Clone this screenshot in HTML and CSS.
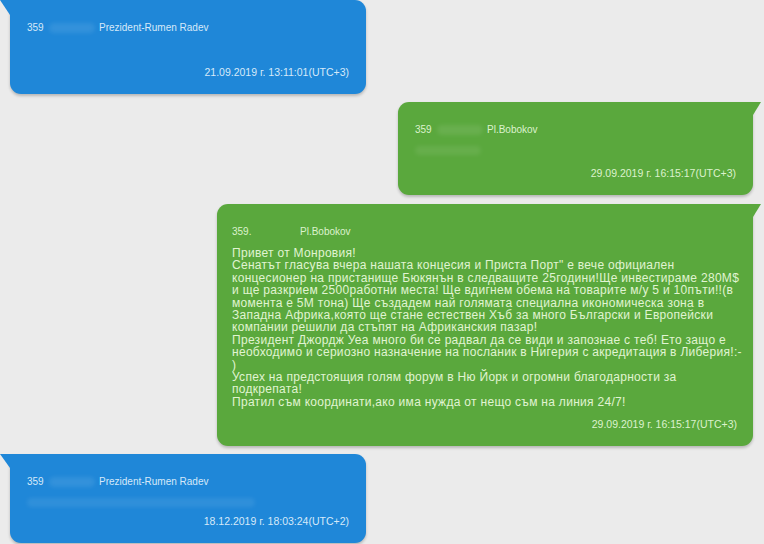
FILE: index.html
```html
<!DOCTYPE html>
<html lang="bg">
<head>
<meta charset="utf-8">
<link rel="stylesheet" href="styles.css">
</head>
<body>
<div class="chat">
  <div class="msg in first">
    <div class="head"><span class="num">359<span class="smudge"></span></span><span class="name">Prezident-Rumen Radev</span></div>
    <div class="time">21.09.2019 г. 13:11:01(UTC+3)</div>
  </div>

  <div class="msg out short">
    <div class="head"><span class="num">359<span class="smudge"></span></span><span class="name">Pl.Bobokov</span></div>
    <div class="blurline narrow"></div>
    <div class="time">29.09.2019 г. 16:15:17(UTC+3)</div>
  </div>

  <div class="msg out long">
    <div class="head"><span class="num">359.</span><span class="name">Pl.Bobokov</span></div>
    <p class="body">Привет от Монровия!<br>Сенатът гласува вчера нашата концесия и Приста Порт" е вече официален<br>концесионер на пристанище Бюкянън в следващите 25години!Ще инвестираме 280M$<br>и ще разкрием 2500работни места! Ще вдигнем обема на товарите м/у 5 и 10пъти!!(в<br>момента е 5М тона) Ще създадем най голямата специална икономическа зона в<br>Западна Африка,която ще стане естествен Хъб за много Български и Европейски<br>компании решили да стъпят на Африканския пазар!<br>Президент Джордж Уеа много би се радвал да се види и запознае с теб! Ето защо е<br>необходимо и сериозно назначение на посланик в Нигерия с акредитация в Либерия!:-<br>)<br>Успех на предстоящия голям форум в Ню Йорк и огромни благодарности за<br>подкрепата!<br>Пратил съм координати,ако има нужда от нещо съм на линия 24/7!</p>
    <div class="time">29.09.2019 г. 16:15:17(UTC+3)</div>
  </div>

  <div class="msg in last">
    <div class="head"><span class="num">359<span class="smudge"></span></span><span class="name">Prezident-Rumen Radev</span></div>
    <div class="blurline wide"></div>
    <div class="time">18.12.2019 г. 18:03:24(UTC+2)</div>
  </div>
</div>
</body>
</html>
```

FILE: styles.css
```css
html, body {
  margin: 0;
  padding: 0;
}
body {
  width: 764px;
  height: 544px;
  overflow: hidden;
  background: #ebebeb;
  font-family: "Liberation Sans", Arial, sans-serif;
}
.chat {
  display: flex;
  flex-direction: column;
  gap: 8px;
}
.msg {
  position: relative;
  display: flex;
  flex-direction: column;
  box-sizing: border-box;
  border-radius: 11px;
  padding: 22px 17px 16px 17px;
  box-shadow: 0 2px 3px rgba(0, 0, 0, 0.22);
}
.msg.in {
  align-self: flex-start;
  margin-left: 10px;
  width: 356px;
  background: #1f87d8;
  color: #d6e9f9;
}
.msg.out {
  align-self: flex-end;
  margin-right: 11px;
  background: #5aa83d;
  color: #dcf2cd;
  border-top-right-radius: 0;
}
.msg.first {
  height: 94px;
  border-top-left-radius: 0;
}
.msg.first::before {
  content: "";
  position: absolute;
  left: -10px;
  top: 0;
  border-top: 15px solid #1f87d8;
  border-left: 10px solid transparent;
}
.msg.last {
  height: 89px;
  border-top-left-radius: 0;
}
.msg.last::before {
  content: "";
  position: absolute;
  left: -10px;
  top: 0;
  border-top: 14px solid #1f87d8;
  border-left: 10px solid transparent;
}
.msg.out::before {
  content: "";
  position: absolute;
  right: -8px;
  top: 0;
  border-top: 13px solid #5aa83d;
  border-right: 8px solid transparent;
}
.msg.short {
  width: 355px;
  height: 93px;
}
.msg.long {
  width: 536px;
  height: 242px;
  padding-left: 15px;
  padding-right: 16px;
  margin-top: 1px;
}
.head {
  display: flex;
  font-size: 10px;
  line-height: 12px;
  white-space: nowrap;
}
.num {
  position: relative;
  width: 72px;
  flex: none;
}
.long .num {
  width: 68px;
}
.smudge {
  position: absolute;
  left: 22px;
  top: 1px;
  width: 46px;
  height: 10px;
  border-radius: 5px;
  background: rgba(255, 255, 255, 0.09);
  filter: blur(2px);
}
.blurline {
  margin-top: 10px;
  height: 9px;
  border-radius: 5px;
  background: rgba(255, 255, 255, 0.08);
  filter: blur(2px);
}
.blurline.narrow {
  width: 66px;
}
.blurline.wide {
  width: 228px;
}
.time {
  margin-top: auto;
  align-self: flex-end;
  font-size: 10.5px;
  line-height: 12px;
  white-space: nowrap;
}
.body {
  margin: 9px 0 0 0;
  font-size: 12px;
  line-height: 12.4px;
  letter-spacing: 0.3px;
  white-space: nowrap;
  color: #e0f4d2;
}
```
